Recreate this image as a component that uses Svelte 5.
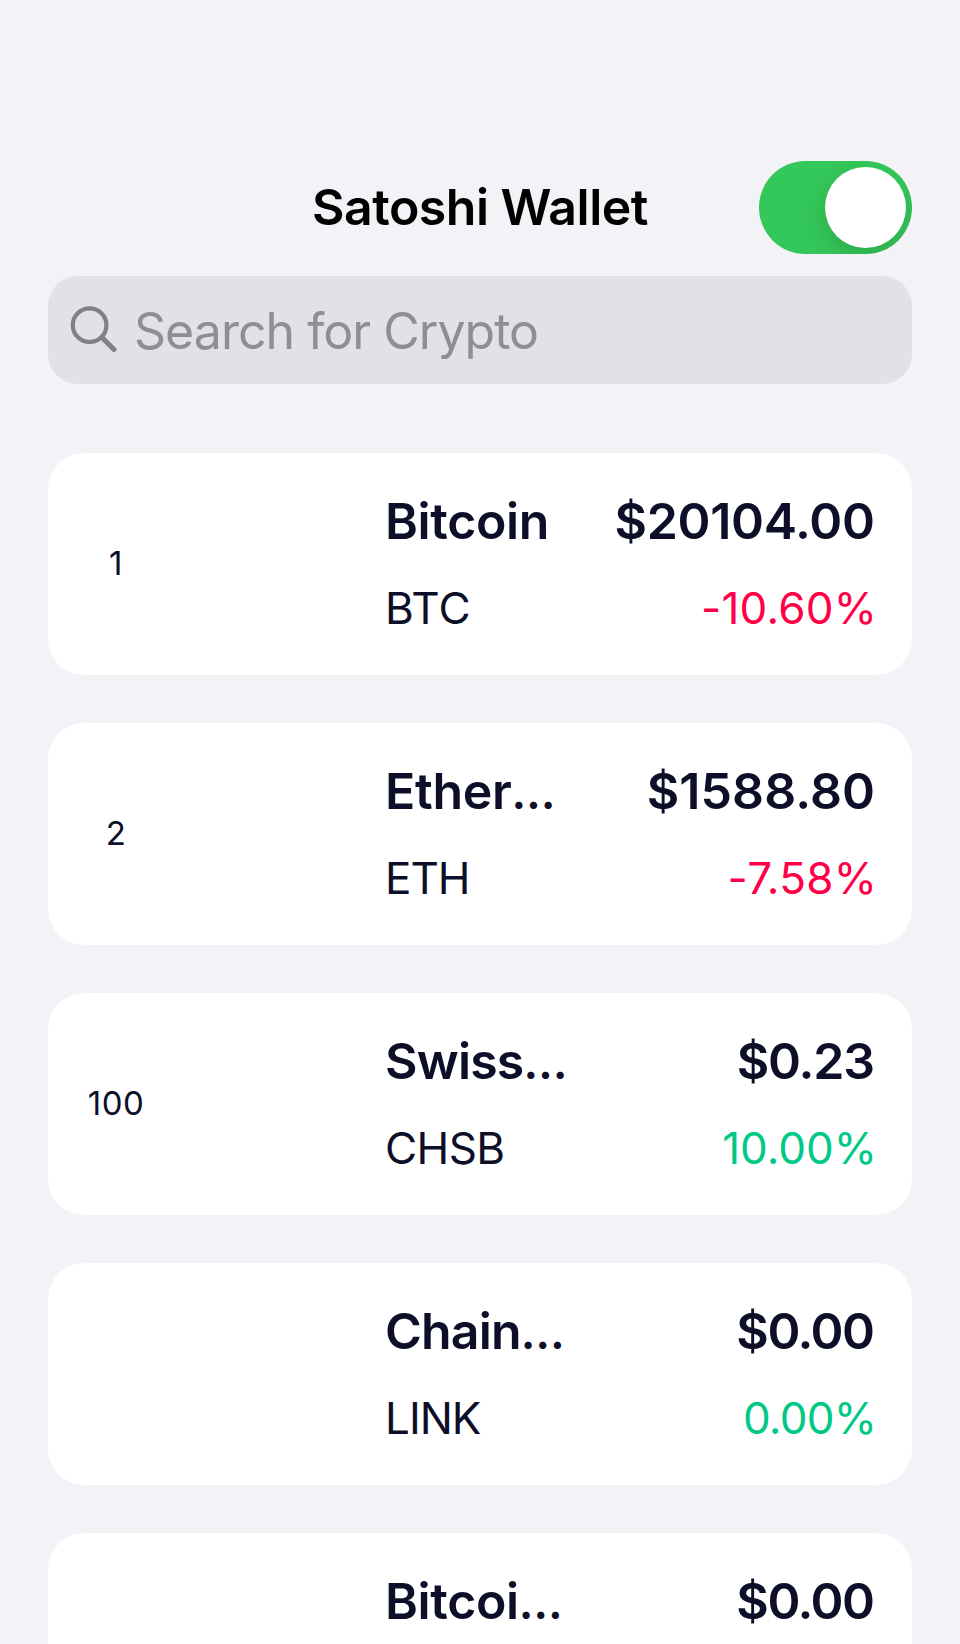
<script>
  // Letter spacing in px for each string: name (n), price (p), symbol (s), change (c)
  const coins = [
    { rank: '1', name: 'Bitcoin', symbol: 'BTC', price: '$20104.00', change: '-10.60%', n: -0.35, p: -0.3, s: 0, c: 0.25 },
    { rank: '2', name: 'Ether', cut: true, symbol: 'ETH', price: '$1588.80', change: '-7.58%', n: -0.3, p: 0.1, s: -1, c: 0.3 },
    { rank: '100', name: 'Swiss', cut: true, symbol: 'CHSB', price: '$0.23', change: '10.00%', n: -0.8, p: -1.2, s: -0.6, c: 0 },
    { rank: '', name: 'Chain', cut: true, symbol: 'LINK', price: '$0.00', change: '0.00%', n: -0.8, p: -1.5, s: -1, c: -0.7 },
    { rank: '', name: 'Bitcoi', cut: true, symbol: '', price: '$0.00', change: '', n: -0.35, p: -1.5, s: 0, c: 0 }
  ];
</script>

<main>
  <header>
    <h1>Satoshi Wallet</h1>
    <button class="switch" aria-label="Toggle"><span class="knob"></span></button>
  </header>
  <div class="search">
    <svg width="48" height="48" viewBox="0 0 48 48" fill="none" stroke="#808085">
      <circle cx="19.6" cy="19.2" r="16.8" stroke-width="4.2" />
      <path d="M32 31.5L44 43.5" stroke-width="5.2" stroke-linecap="round" />
    </svg>
    <span>Search for Crypto</span>
  </div>
  <section>
    {#each coins as c}
      <article>
        <span class="rank">{c.rank}</span>
        <div class="id">
          <strong style:letter-spacing="{c.n}px">{c.name}{#if c.cut}<span class="dots">…</span>{/if}</strong>
          <span style:letter-spacing="{c.s}px">{c.symbol}</span>
        </div>
        <div class="val">
          <strong style:letter-spacing="{c.p}px" style:margin-right="{-1 - c.p}px">{c.price}</strong>
          <span class={c.change.startsWith('-') ? 'down' : 'up'} style:letter-spacing="{c.c}px" style:margin-right="{-3 - c.c}px">{c.change}</span>
        </div>
      </article>
    {/each}
  </section>
</main>

<style>
  :global(body) { background: #f2f2f7; }
  main { box-sizing: border-box; height: 1644px; overflow: hidden; padding: 160px 48px 0; font-family: Inter, sans-serif; background: #f2f2f7; color: #0c0f27; }
  header { display: grid; grid-template-columns: 1fr auto 1fr; align-items: center; height: 94px; }
  h1 { grid-column: 2; margin: 0; font-size: 50px; font-weight: 600; line-height: 60px; color: #000; letter-spacing: -0.5px; white-space: nowrap; }
  .switch { justify-self: end; display: flex; justify-content: flex-end; align-items: center; box-sizing: border-box; width: 153px; height: 93px; padding: 0 6px; border: 0; border-radius: 47px; background: #34c759; overflow: hidden; }
  .knob { width: 81px; height: 81px; border-radius: 50%; background: #fff; box-shadow: 0 9px 24px rgba(0,0,0,.15); }
  .search { display: flex; align-items: center; box-sizing: border-box; height: 108px; margin-top: 22px; padding-left: 22px; gap: 16px; border-radius: 30px; background: #e2e1e6; color: #8e8e93; font-size: 50px; letter-spacing: -0.97px; }
  .search span { padding-top: 1px; }
  section { display: flex; flex-direction: column; gap: 48px; margin-top: 69px; }
  article { display: grid; grid-template-columns: 66px 1fr auto; flex: none; box-sizing: border-box; height: 222px; padding: 38px 38px 0 35px; border-radius: 36px; background: #fff; }
  .rank { align-self: center; padding-bottom: 40px; text-align: center; font-size: 33px; letter-spacing: 0.4px; }
  .id { padding-left: 236px; }
  .id, .val { display: flex; flex-direction: column; font-size: 44px; line-height: 60px; gap: 27px; }
  .val { text-align: right; }
  strong { font-size: 50px; font-weight: 600; white-space: nowrap; }
  .dots { font-size: 46px; line-height: 1; }
  .down { color: #fe0048; }
  .up { color: #00c986; }
</style>
